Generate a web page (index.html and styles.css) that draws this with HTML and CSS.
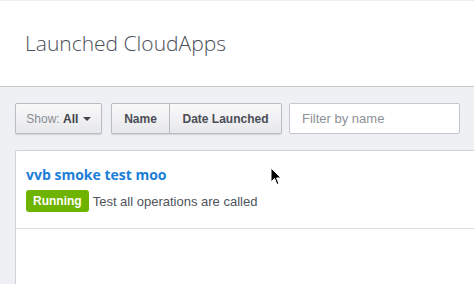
FILE: index.html
```html
<!DOCTYPE html>
<html lang="en">
<head>
    <meta charset="UTF-8">
    <title>Launched CloudApps</title>
    <link rel="stylesheet" href="styles.css">
</head>
<body>
    <div class="page-header">
        <h1 class="page-title">Launched CloudApps</h1>
    </div>

    <div class="content">
        <div class="toolbar">
            <button class="btn btn-show">Show: <strong>All</strong> <span class="caret"></span></button>
            <div class="btn-group">
                <button class="btn btn-sort">Name</button>
                <button class="btn btn-sort">Date Launched</button>
            </div>
            <input type="text" class="filter-input" placeholder="Filter by name">
        </div>

        <div class="app-list">
            <div class="app-item">
                <a href="#" class="app-name">vvb smoke test moo</a>
                <div class="app-meta">
                    <span class="badge-running">Running</span>
                    <span class="app-desc">Test all operations are called</span>
                </div>
            </div>
        </div>
    </div>

    <svg class="cursor" width="12" height="19" viewBox="0 0 12 19">
        <path d="M1 1 L1 15 L4.5 11.5 L7 17.5 L9 16.6 L6.6 11 L11 11 Z" fill="#000" stroke="#fff" stroke-width="1"/>
    </svg>
</body>
</html>
```

FILE: styles.css
```css
/* Khung nền chung */
body {
    margin: 0;
    font-family: "Liberation Sans", Arial, sans-serif;
    background-color: #eff0f4;
    overflow: hidden;
    height: 284px;
}

/* Tiêu đề trang */
.page-header {
    background-color: #fff;
    border-top: 1px solid #ececec;
    border-bottom: 1px solid #c9cbd0;
    height: 85px;
    display: flex;
    align-items: center;
    padding-left: 25px;
}

.page-title {
    margin: 0 0 2px 0;
    font-family: "Open Sans", sans-serif;
    font-weight: 300;
    font-size: 21px;
    color: #4a4e58;
}

.content {
    padding: 16px 0 0 15px;
}

/* Thanh công cụ */
.toolbar {
    display: flex;
    align-items: center;
    gap: 9px;
}

.btn {
    font-family: "Liberation Sans", Arial, sans-serif;
    font-size: 12px;
    height: 31px;
    padding: 0 12px;
    border: 1px solid #b9bcc2;
    border-radius: 2px;
    background: linear-gradient(#f9f9fa, #e7e8eb);
    color: #3f434b;
    box-shadow: 0 1px 1px rgba(0, 0, 0, 0.12);
    cursor: pointer;
}

.btn-show {
    width: 87px;
    color: #8a8d93;
    padding: 0;
}

.btn-show strong {
    color: #3f434b;
}

.caret {
    display: inline-block;
    width: 0;
    height: 0;
    border-left: 4px solid transparent;
    border-right: 4px solid transparent;
    border-top: 4px solid #3f434b;
    vertical-align: middle;
    margin-left: 1px;
}

.btn-group {
    display: flex;
}

.btn-sort {
    font-weight: bold;
    color: #4a4e56;
}

.btn-group .btn:first-child {
    width: 59px;
    padding: 0;
    border-radius: 2px 0 0 2px;
}

.btn-group .btn:last-child {
    width: 112px;
    padding: 0;
    border-left: none;
    border-radius: 0 2px 2px 0;
}

.filter-input {
    width: 171px;
    height: 31px;
    box-sizing: border-box;
    margin-left: -2px;
    border: 1px solid #c3c6cc;
    border-radius: 2px;
    padding: 0 12px;
    font-family: "Liberation Sans", Arial, sans-serif;
    font-size: 13px;
    outline: none;
}

.filter-input::placeholder {
    color: #8d9098;
}

/* Danh sách ứng dụng */
.app-list {
    margin-top: 16px;
    background-color: #fff;
    border: 1px solid #cfd1d6;
    border-right: none;
    border-bottom: none;
    border-radius: 2px 0 0 0;
    height: 133px;
}

.app-item {
    padding: 14px 10px 16px 10px;
    border-bottom: 1px solid #dcdde1;
}

.app-name {
    display: block;
    font-family: "Open Sans", sans-serif;
    font-weight: 700;
    font-size: 14px;
    color: #1b7ed8;
    text-decoration: none;
}

.app-meta {
    display: flex;
    align-items: center;
    margin-top: 6px;
}

.badge-running {
    background-color: #6db300;
    color: #fff;
    font-weight: bold;
    font-size: 12px;
    padding: 4px 7px;
    border-radius: 3px;
    margin-right: 4px;
}

.app-desc {
    font-size: 13px;
    color: #4f535b;
}

/* Con trỏ chuột trong ảnh chụp */
.cursor {
    position: absolute;
    left: 270px;
    top: 167px;
}
```
